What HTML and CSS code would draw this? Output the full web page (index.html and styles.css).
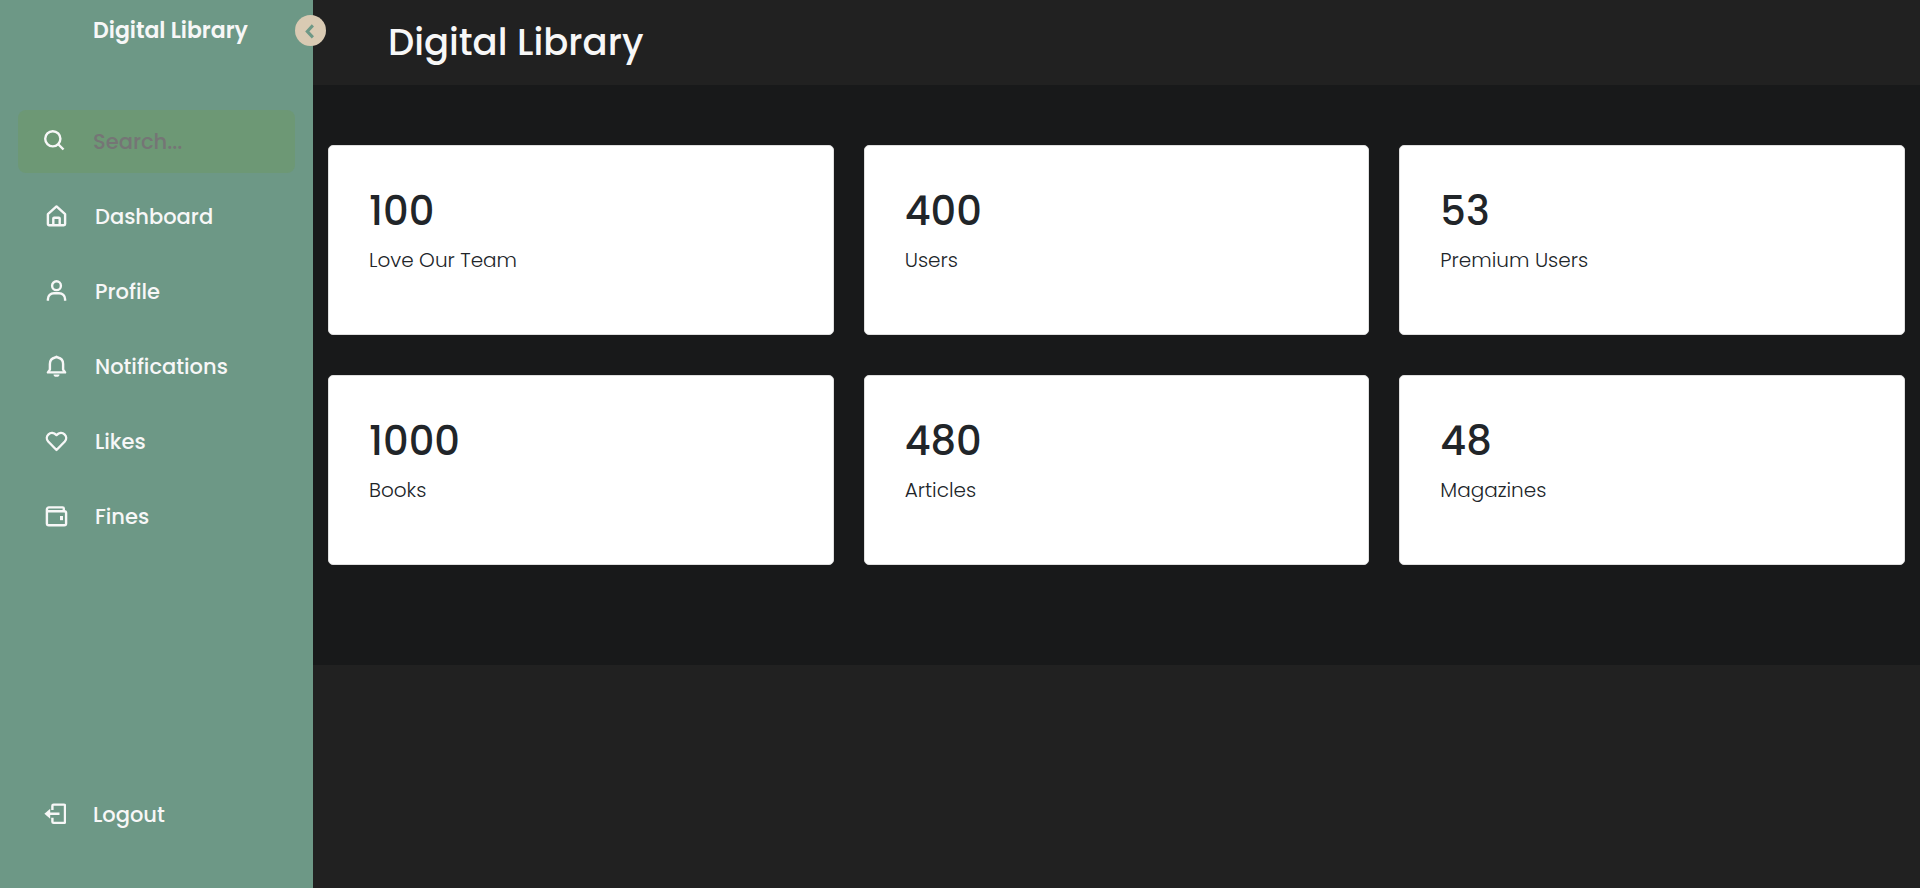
FILE: index.html
```html
<!DOCTYPE html>
<html lang="en">
<head>
<meta charset="utf-8">
<meta name="viewport" content="width=device-width, initial-scale=1">
<title>Digital Library</title>
<link rel="stylesheet" href="styles.css">
</head>
<body>
<div class="app">
  <aside class="sidebar">
    <button class="toggle" type="button" aria-label="Collapse sidebar">
      <svg class="chevron" viewBox="0 0 24 24"><path d="m14.500 4.500-7.500 8 7.500 8"/></svg>
    </button>
    <div class="brand">Digital Library</div>
    <label class="row search">
      <svg class="icon" viewBox="0 0 24 24"><circle cx="10.800" cy="8.800" r="7.600"/><path d="m16 14 5.500 5.500"/></svg>
      <input class="search-input" type="text" placeholder="Search..." aria-label="Search">
    </label>
    <nav class="menu">
      <a class="row link" href="#"><svg class="icon" viewBox="0 0 24 24"><path d="M3.900 9.200 12.500 1.400l8.600 7.800v9.900a1.200 1.200 0 0 1-1.200 1.200H5.100a1.200 1.200 0 0 1-1.200-1.200zM9.300 19.700v-6.200a.8.800 0 0 1 .8-.8h4.800a.8.800 0 0 1 .8.800v6.200"/></svg>Dashboard</a>
      <a class="row link" href="#"><svg class="icon" viewBox="0 0 24 24"><circle cx="12.500" cy="5.700" r="4.400"/><path d="M3.900 20.700v-1.500a6 6 0 0 1 6-6h5.200a6 6 0 0 1 6 6v1.500"/></svg>Profile</a>
      <a class="row link" href="#"><svg class="icon" viewBox="0 0 24 24"><path d="M3.900 17.400h17.200l-2-2.800V9c0-3.600-2.400-5.900-5.300-6.500l-1.300-.8-1.300.8C8.300 3.100 5.900 5.400 5.900 9v5.600z"/><path class="solid" d="M9.500 19.500h6a3 2.300 0 0 1-6 0z"/></svg>Notifications</a>
      <a class="row link" href="#"><svg class="icon" viewBox="0 0 24 24"><path d="M12.500 20 4.200 11.500A5.100 5.100 0 0 1 4.500 4.300c2.100-2 5.400-1.900 8 .8 2.600-2.700 5.900-2.800 8-.8a5.100 5.100 0 0 1 .3 7.200z"/></svg>Likes</a>
      <a class="row link" href="#"><svg class="icon" viewBox="0 0 24 24"><path d="M19.800 6.300V3.600a1.200 1.200 0 0 0-1.200-1.200H4.900a2 2 0 0 0-2 2v14a1.800 1.800 0 0 0 1.800 1.800h15.600a1.800 1.800 0 0 0 1.800-1.800V8.100a1.800 1.800 0 0 0-1.800-1.800H4.900a2 2 0 0 1-2-1.800"/><path class="solid" d="M16 11h3v4.200h-3z"/></svg>Fines</a>
    </nav>
    <a class="row logout" href="#"><svg class="icon" viewBox="0 0 24 24"><path d="M10.400 7V2.800a1.200 1.200 0 0 1 1.200-1.200h10.200A1.200 1.200 0 0 1 23 2.800v15.900a1.200 1.200 0 0 1-1.200 1.200H11.600a1.200 1.200 0 0 1-1.200-1.200v-4M7 10.800h10.500"/><path class="solid" d="M8.200 5.800v10L2.400 10.800z"/></svg>Logout</a>
  </aside>
  <main class="page">
    <header class="topbar"><h1 class="title">Digital Library</h1></header>
    <section class="stats">
      <article class="card"><h2 class="number">100</h2><p class="caption">Love Our Team</p></article>
      <article class="card"><h2 class="number">400</h2><p class="caption">Users</p></article>
      <article class="card"><h2 class="number">53</h2><p class="caption">Premium Users</p></article>
      <article class="card"><h2 class="number">1000</h2><p class="caption">Books</p></article>
      <article class="card"><h2 class="number">480</h2><p class="caption">Articles</p></article>
      <article class="card"><h2 class="number">48</h2><p class="caption">Magazines</p></article>
    </section>
  </main>
</div>
</body>
</html>
```
FILE: styles.css
```css
* {
  box-sizing: border-box;
}

body {
  margin: 0;
  background: #212121;
  font-family: Poppins, Inter, "Open Sans", sans-serif;
}

h1, h2, p {
  margin: 0;
}

.app {
  display: flex;
  min-height: 100vh;
}

.sidebar {
  position: relative;
  display: flex;
  flex: none;
  flex-direction: column;
  width: 313px;
  padding: 0 18px 42px;
  background: #6d9886;
  color: #f7f7f7;
}

.brand {
  margin-bottom: 48px;
  padding-left: 75px;
  font-size: 22px;
  font-weight: 600;
  line-height: 62px;
}

.toggle {
  position: absolute;
  top: 15px;
  right: -13px;
  display: flex;
  align-items: center;
  justify-content: center;
  width: 31px;
  height: 31px;
  padding: 0;
  border: 0;
  border-radius: 50%;
  background: #d9cab3;
  color: #6d9886;
  cursor: pointer;
}

.chevron {
  width: 18px;
  height: 18px;
  fill: none;
  stroke: currentColor;
  stroke-width: 4;
}

.row {
  display: flex;
  align-items: center;
  gap: 27px;
  min-height: 63px;
  padding-left: 24px;
  border-radius: 8px;
  color: #f7f7f7;
  font-size: 21px;
  font-weight: 500;
  text-decoration: none;
}

.icon {
  flex: none;
  width: 24px;
  height: 24px;
  fill: none;
  stroke: currentColor;
  stroke-width: 2.4;
  stroke-linejoin: round;
}

.solid {
  fill: currentColor;
  stroke: none;
}

.search {
  margin-bottom: 12px;
  background: #6d9875;
}

.search-input {
  flex: 1;
  min-width: 0;
  padding: 0;
  border: 0;
  outline: 0;
  background: transparent;
  color: #f7f7f7;
  font: inherit;
}

.search-input::placeholder {
  color: #757575;
}

.menu {
  display: flex;
  flex-direction: column;
  gap: 12px;
}

.link {
  padding-left: 26px;
}

.logout {
  margin-top: auto;
}

.page {
  flex: 1;
  min-width: 0;
}

.topbar {
  padding: 17px 75px;
}

.title {
  color: #f7f7f7;
  font-size: 37px;
  font-weight: 500;
  line-height: 51px;
}

.stats {
  display: grid;
  grid-template-columns: repeat(3, 1fr);
  gap: 40px 30px;
  padding: 60px 15px 100px;
  background: #18191a;
}

.card {
  padding: 41px 40px 56px;
  border: 1px solid #dfdfdf;
  border-radius: 5px;
  background: #fff;
  color: #212529;
}

.number {
  margin-bottom: 7px;
  font-size: 40px;
  font-weight: 500;
  line-height: 48px;
}

.caption {
  font-size: 20px;
  font-weight: 300;
  line-height: 36px;
}
```
